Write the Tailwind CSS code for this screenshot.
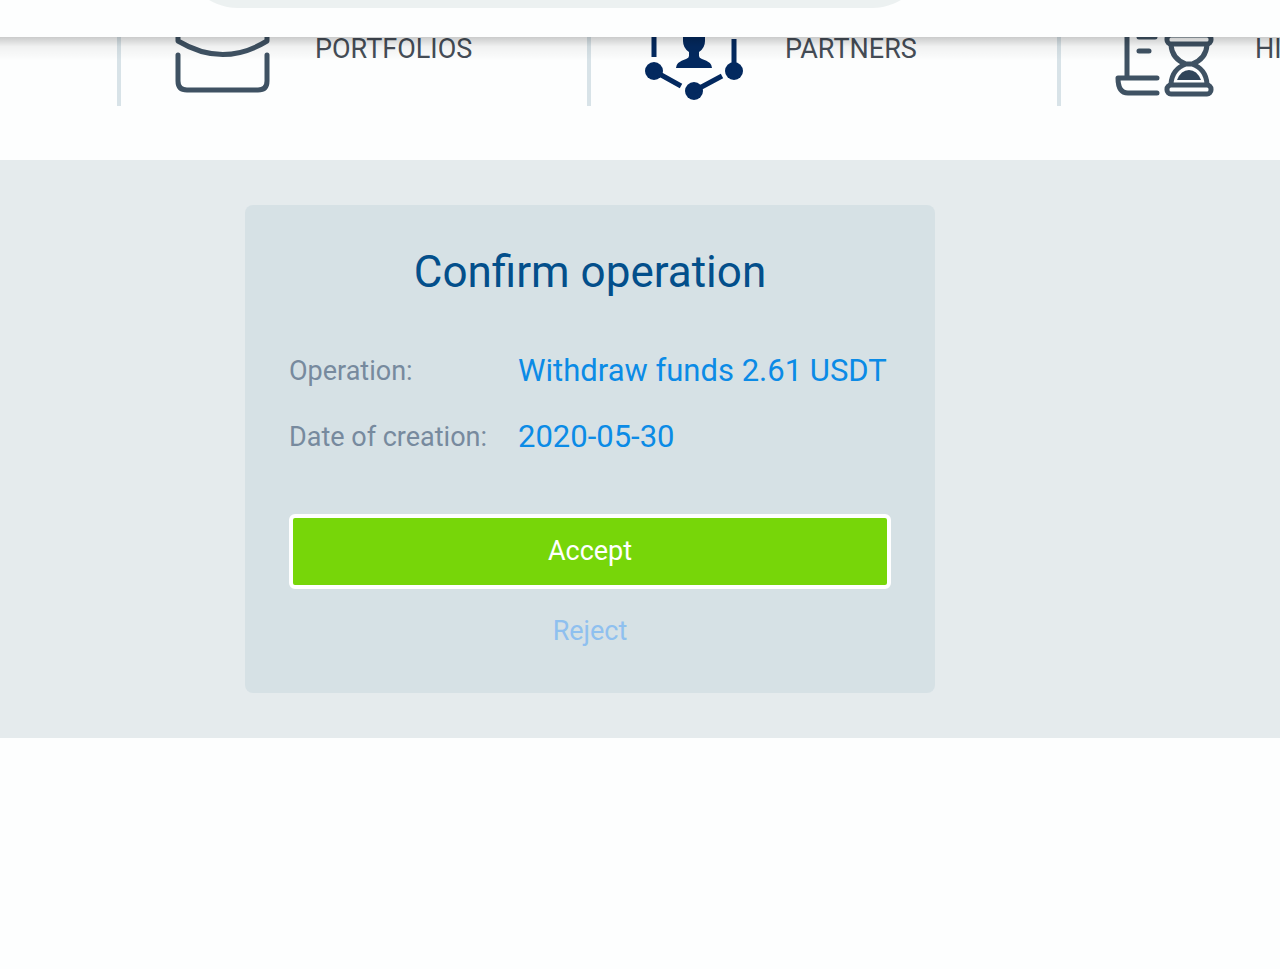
<!DOCTYPE html>
<html lang="en">
<head>
    <meta charset="UTF-8">
    <meta name="viewport" content="width=device-width, initial-scale=1.0">
    <title>Confirm operation</title>
    <script src="https://cdn.jsdelivr.net/npm/@tailwindcss/browser@4"></script>
</head>
<body class="bg-[#fdfefe] min-h-screen overflow-x-hidden font-['Roboto',sans-serif]">
    <!-- Top bar -->
    <header class="relative z-10 h-[37px] overflow-hidden bg-[#fdfefe]">
        <div class="-mt-[104px] ml-[182px] h-28 max-w-[746px] rounded-full bg-[#ecf1f1]"></div>
    </header>

    <!-- Navigation -->
    <nav class="relative -mt-[45px] flex overflow-hidden pl-[117px] pb-[54px] text-[27px] text-[#454d57]">
        <a href="#" class="flex h-[114px] w-[470px] shrink-0 items-center gap-10 border-l-4 border-[#d8e3e8] pl-[54px]">
            <svg class="size-[100px]" viewBox="0 0 100 100" fill="none" stroke="#3f5263" stroke-width="5" stroke-linecap="round" stroke-linejoin="round">
                <path d="M3 56v26q0 9 9 9h71q9 0 9-9V56"/>
                <path d="M3 42V28q0-8 8-8h73q8 0 8 8v14Q48 69 3 42z"/>
                <path d="M33 20v-8q0-5 5-5h19q5 0 5 5v8"/>
            </svg>
            PORTFOLIOS
        </a>
        <a href="#" class="flex h-[114px] w-[470px] shrink-0 items-center gap-10 border-l-4 border-[#d8e3e8] pl-[54px]">
            <svg class="size-[100px] overflow-visible" viewBox="0 0 100 100" fill="#03295f" stroke="none">
                <circle cx="9" cy="72" r="9"/>
                <circle cx="89" cy="72" r="9"/>
                <circle cx="49" cy="92" r="9"/>
                <circle cx="9" cy="27" r="9"/>
                <circle cx="49" cy="8" r="8"/>
                <path d="M9 27v31M89 40v32M9 72l27 15M49 92l28-15" stroke="#03295f" stroke-width="5"/>
                <path d="M38 32q0-9 11-9t11 9v10q0 7-6 11v4q0 2 3 3 10 3 10 9H31q0-6 10-9 3-1 3-3v-4q-6-4-6-11z"/>
            </svg>
            PARTNERS
        </a>
        <a href="#" class="flex h-[114px] w-[470px] shrink-0 items-center gap-10 border-l-4 border-[#d8e3e8] pl-[54px]">
            <svg class="size-[100px]" viewBox="0 0 100 100" fill="none" stroke="#3f5263" stroke-width="5" stroke-linecap="round" stroke-linejoin="round">
                <path d="M12 79V10h50v14M42 79H3q0 15 10 15h29"/>
                <path d="M24 38h16M24 52h10"/>
                <rect x="52" y="36" width="44" height="9" rx="4"/>
                <rect x="52" y="86" width="44" height="9" rx="4"/>
                <path d="M56 46q1 14 15 19Q57 70 56 85M92 46q-1 14-15 19Q91 70 92 85M71 65h6"/>
                <path d="M62 81q4-10 12-10t12 10z" fill="#30455a" stroke="none"/>
            </svg>
            HISTORY
        </a>
        <div class="absolute inset-x-0 top-[45px] h-6 bg-linear-to-b from-black/20 via-black/5 via-40% to-transparent"></div>
    </nav>

    <!-- Confirmation -->
    <main class="bg-[#e5ebed] py-[45px] pl-[245px]">
        <form class="max-w-[690px] rounded-lg bg-[#d6e1e5] px-11 pt-[45px] pb-[46px]">
            <h1 class="text-center text-[44px] leading-11 text-[#034f8b]">Confirm operation</h1>
            <table class="mt-11 w-full text-left">
                <tbody>
                    <tr class="h-[66px]">
                        <th scope="row" class="w-[229px] text-[27px] font-normal text-[#778a9e]">Operation:</th>
                        <td class="text-[31px] whitespace-nowrap text-[#0b8be6]">Withdraw funds 2.61 USDT</td>
                    </tr>
                    <tr class="h-[66px]">
                        <th scope="row" class="w-[229px] text-[27px] font-normal text-[#778a9e]">Date of creation:</th>
                        <td class="text-[31px] whitespace-nowrap text-[#0b8be6]">2020-05-30</td>
                    </tr>
                </tbody>
            </table>
            <button type="button" class="mt-11 block h-[75px] w-full rounded-md border-4 border-white bg-[#77d609] text-[27px] text-white">Accept</button>
            <button type="button" class="mt-[27px] block w-full text-[27px] leading-[31px] text-[#8fc0ef]">Reject</button>
        </form>
    </main>
</body>
</html>
